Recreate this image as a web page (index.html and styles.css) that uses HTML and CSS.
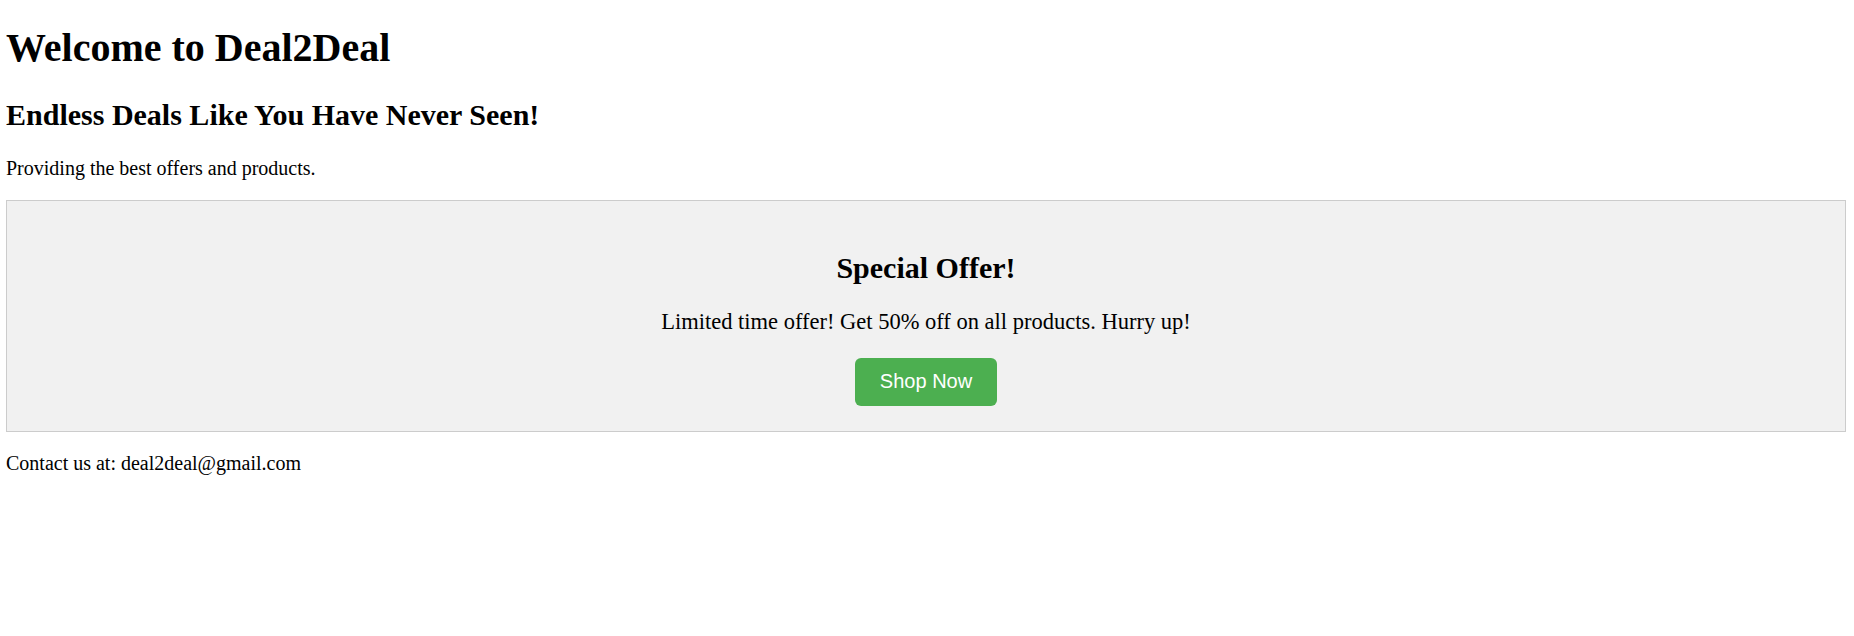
FILE: index.html
```html
<!DOCTYPE html>
<html lang="en">
<head>
<meta charset="utf-8">
<title>Deal2Deal</title>
<link rel="stylesheet" href="styles.css">
</head>
<body>
<header class="site-header">
  <h1 class="title">Welcome to Deal2Deal</h1>
  <h2 class="subtitle">Endless Deals Like You Have Never Seen!</h2>
  <p class="tagline">Providing the best offers and products.</p>
</header>
<section class="offer">
  <h2 class="offer-title">Special Offer!</h2>
  <p class="offer-text">Limited time offer! Get 50% off on all products. Hurry up!</p>
  <button class="shop-btn" type="button">Shop Now</button>
</section>
<footer class="site-footer">
  <p class="contact">Contact us at: deal2deal@gmail.com</p>
</footer>
</body>
</html>
```
FILE: styles.css
```css
body {
  margin: 6px 8px 6px 6px;
  font-family: "Liberation Serif", "Times New Roman", serif;
  font-size: 20px;
  color: #000;
  background: #fff;
}
.title {
  font-size: 40px;
  margin: 18px 0 26.8px;
}
.subtitle,
.offer-title {
  font-size: 30px;
  margin: 24.9px 0;
}
.tagline,
.contact {
  font-size: 20px;
  margin: 20px 0;
}
.offer {
  margin: 20px 0;
  background: #f1f1f1;
  border: 1px solid #ccc;
  padding: 25px;
  text-align: center;
}
.offer-text {
  font-size: 22.5px;
  margin: 22.5px 0;
}
.shop-btn {
  background: #4caf50;
  color: #fff;
  border: none;
  border-radius: 6px;
  padding: 12.5px 25px;
  font-family: "Liberation Sans", Arial, sans-serif;
  font-size: 20px;
  cursor: pointer;
}
```
